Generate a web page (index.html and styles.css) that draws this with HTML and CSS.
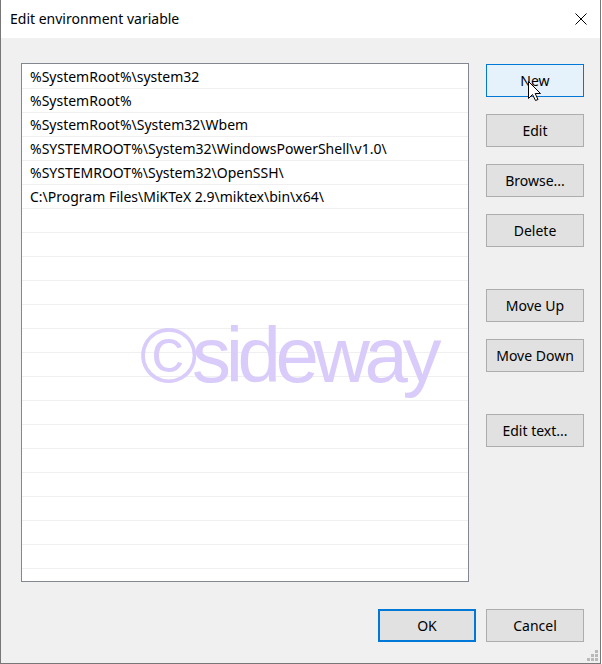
FILE: index.html
```html
<!DOCTYPE html>
<html>
<head>
<meta charset="utf-8">
<title>Edit environment variable</title>
<link rel="stylesheet" href="styles.css">
</head>
<body>
<div class="window">
  <div class="titlebar">
    <span class="title">Edit environment variable</span>
    <svg class="close" width="12" height="12" viewBox="0 0 12 12"><path d="M0.5 0.5 L11.5 11.5 M11.5 0.5 L0.5 11.5" stroke="#000" stroke-width="1" fill="none"/></svg>
  </div>
  <div class="content">
    <div class="main">
      <div class="list">
        <div class="row">%SystemRoot%\system32</div>
        <div class="row">%SystemRoot%</div>
        <div class="row">%SystemRoot%\System32\Wbem</div>
        <div class="row">%SYSTEMROOT%\System32\WindowsPowerShell\v1.0\</div>
        <div class="row">%SYSTEMROOT%\System32\OpenSSH\</div>
        <div class="row">C:\Program Files\MiKTeX 2.9\miktex\bin\x64\</div>
        <div class="row"></div><div class="row"></div><div class="row"></div><div class="row"></div>
        <div class="row"></div><div class="row"></div><div class="row"></div><div class="row"></div>
        <div class="row"></div><div class="row"></div><div class="row"></div><div class="row"></div>
        <div class="row"></div><div class="row"></div><div class="row"></div><div class="row"></div>
      </div>
      <div class="side">
        <button class="btn hover">New</button>
        <button class="btn">Edit</button>
        <button class="btn">Browse...</button>
        <button class="btn">Delete</button>
        <button class="btn group">Move Up</button>
        <button class="btn">Move Down</button>
        <button class="btn group">Edit text...</button>
      </div>
    </div>
    <div class="footer">
      <button class="btn default">OK</button>
      <button class="btn">Cancel</button>
    </div>
  </div>
  <div class="watermark">©sideway</div>
  <svg class="cursor" width="14" height="21" viewBox="0 0 14 21"><path d="M0.5 0.5 L0.5 17.5 L4.5 13.5 L7.5 19.5 L10 18.5 L7.2 12.5 L12.5 12.5 Z" fill="#fff" stroke="#000" stroke-width="1" stroke-linejoin="miter"/></svg>
  <svg class="grip" width="11" height="11" viewBox="0 0 11 11">
    <rect x="8" y="0" width="3" height="3" fill="#b9b9b9"/>
    <rect x="4" y="4" width="3" height="3" fill="#b9b9b9"/>
    <rect x="8" y="4" width="3" height="3" fill="#b9b9b9"/>
    <rect x="0" y="8" width="3" height="3" fill="#b9b9b9"/>
    <rect x="4" y="8" width="3" height="3" fill="#b9b9b9"/>
    <rect x="8" y="8" width="3" height="3" fill="#b9b9b9"/>
  </svg>
</div>
</body>
</html>
```
FILE: styles.css
```css
html, body {
  margin: 0;
  padding: 0;
  background: #fff;
}
body {
  font-family: "Noto Sans", "Open Sans", sans-serif;
  font-size: 14px;
  color: #000;
}
.window {
  position: relative;
  width: 601px;
  height: 664px;
  box-sizing: border-box;
  border-left: 1px solid #777;
  border-right: 1px solid #777;
  border-bottom: 1px solid #777;
  display: flex;
  flex-direction: column;
  overflow: hidden;
}
.titlebar {
  height: 38px;
  flex: none;
  background: #fff;
  display: flex;
  align-items: center;
  justify-content: space-between;
  padding: 0 13px 0 9px;
}
.title {
  font-size: 14px;
  line-height: 20px;
  margin-top: -1px;
}
.close {
  display: block;
}
.content {
  flex: 1;
  background: #f0f0f0;
  padding: 25px 16px 0 20px;
  display: flex;
  flex-direction: column;
}
.main {
  display: flex;
  gap: 17px;
}
.list {
  width: 448px;
  height: 519px;
  box-sizing: border-box;
  border: 1px solid #828790;
  background: #fff;
  padding-top: 1px;
  overflow: hidden;
}
.row {
  height: 24px;
  box-sizing: border-box;
  border-bottom: 1px solid #f0f0f0;
  padding-left: 8px;
  line-height: 24px;
  white-space: nowrap;
}
.side {
  width: 98px;
  display: flex;
  flex-direction: column;
  gap: 17px;
  padding-top: 1px;
}
.btn {
  width: 98px;
  height: 33px;
  box-sizing: border-box;
  border: 1px solid #adadad;
  background: #e1e1e1;
  font-family: "Noto Sans", "Open Sans", sans-serif;
  font-size: 14px;
  color: #000;
  padding: 0 0 1px 0;
  margin: 0;
  border-radius: 0;
}
.btn.hover {
  background: #e5f1fb;
  border-color: #0078d7;
}
.btn.default {
  border: 2px solid #0078d7;
}
.btn.group {
  margin-top: 25px;
}
.footer {
  display: flex;
  justify-content: flex-end;
  gap: 10px;
  margin-top: 27px;
}
.watermark {
  position: absolute;
  left: 139px;
  top: 316px;
  font-family: "Liberation Sans", Arial, sans-serif;
  font-size: 78px;
  line-height: 78px;
  letter-spacing: -5.4px;
  color: #d9ccfa;
  white-space: nowrap;
  pointer-events: none;
}
.cursor {
  position: absolute;
  left: 527px;
  top: 81px;
}
.grip {
  position: absolute;
  left: 586px;
  top: 650px;
}
```
